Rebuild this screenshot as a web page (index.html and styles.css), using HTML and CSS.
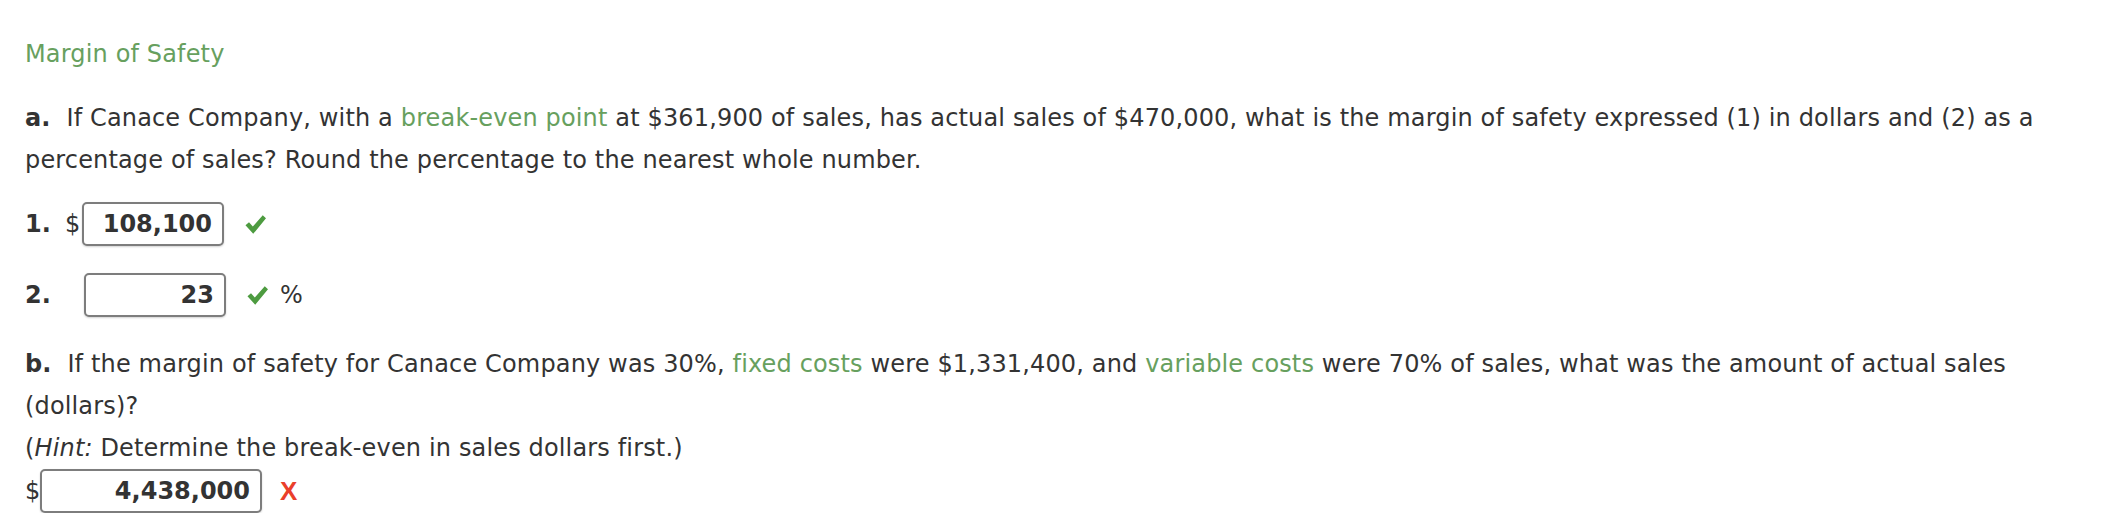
FILE: index.html
```html
<!DOCTYPE html>
<html lang="en">
<head>
<meta charset="utf-8">
<title>Margin of Safety</title>
<link rel="stylesheet" href="styles.css">
</head>
<body>
<div class="page">
  <div class="title">Margin of Safety</div>

  <p class="q q-a"><span class="lbl">a.</span> If Canace Company, with a <span class="term">break-even point</span> at $361,900 of sales, has actual sales of $470,000, what is the margin of safety expressed (1) in dollars and (2) as a percentage of sales? Round the percentage to the nearest whole number.</p>

  <div class="row row-1">
    <span class="num">1.</span>
    <span class="cur">$</span>
    <span class="box box-s">108,100</span>
    <svg class="check" viewBox="0 0 24 22" aria-hidden="true"><path d="M1.5 11.8 L5.2 8.6 L9.2 13.2 L19.6 1.2 L23 4.4 L9.6 20.8 Z"/></svg>
  </div>

  <div class="row row-2">
    <span class="num">2.</span>
    <span class="cur cur-empty"></span>
    <span class="box box-s">23</span>
    <svg class="check" viewBox="0 0 24 22" aria-hidden="true"><path d="M1.5 11.8 L5.2 8.6 L9.2 13.2 L19.6 1.2 L23 4.4 L9.6 20.8 Z"/></svg>
    <span class="unit">%</span>
  </div>

  <p class="q q-b"><span class="lbl">b.</span> If the margin of safety for Canace Company was 30%, <span class="term">fixed costs</span> were $1,331,400, and <span class="term">variable costs</span> were 70% of sales, what was the amount of actual sales (dollars)?<br>(<i>Hint:</i> Determine the break-even in sales dollars first.)</p>

  <div class="row row-3">
    <span class="cur cur-b">$</span>
    <span class="box box-l">4,438,000</span>
    <span class="wrong">X</span>
  </div>
</div>
</body>
</html>
```

FILE: styles.css
```css
html, body {
  margin: 0;
  padding: 0;
  background: #ffffff;
}

.page {
  padding: 33px 25px 0 25px;
  font-family: "DejaVu Sans", Verdana, sans-serif;
  font-size: 24px;
  line-height: 42px;
  letter-spacing: 0.15px;
  color: #333333;
}

.title {
  color: #67a05e;
}

.q {
  margin: 0;
}

.q-a {
  margin-top: 22px;
}

.q-b {
  margin-top: 26px;
}

.lbl {
  font-weight: bold;
  margin-right: 8px;
}

.term {
  color: #67a05e;
}

.row {
  display: flex;
  align-items: center;
  height: 44px;
}

.row-1 {
  margin-top: 21px;
}

.row-2 {
  margin-top: 27px;
}

.row-3 {
  margin-top: 0;
}

.num {
  font-weight: bold;
  width: 40px;
}

.cur {
  width: 17px;
  line-height: 44px;
}

.cur-empty {
  width: 19px;
}

.cur-b {
  width: 15px;
}

.box {
  box-sizing: border-box;
  height: 44px;
  border: 2px solid #7d7d7d;
  border-radius: 5px;
  box-shadow: 0 1px 2px rgba(0, 0, 0, 0.18);
  font-weight: bold;
  text-align: right;
  padding: 0 10px 0 6px;
  line-height: 40px;
  background: #ffffff;
  letter-spacing: 0;
}

.box-s {
  width: 142px;
}

.box-l {
  width: 222px;
}

.check {
  width: 23px;
  height: 21px;
  margin-left: 20px;
  fill: #4d9b40;
}

.unit {
  margin-left: 11px;
}

.wrong {
  font-family: "Liberation Sans", Arial, sans-serif;
  font-weight: bold;
  font-size: 26px;
  color: #ea3f2b;
  margin-left: 18px;
}
```
